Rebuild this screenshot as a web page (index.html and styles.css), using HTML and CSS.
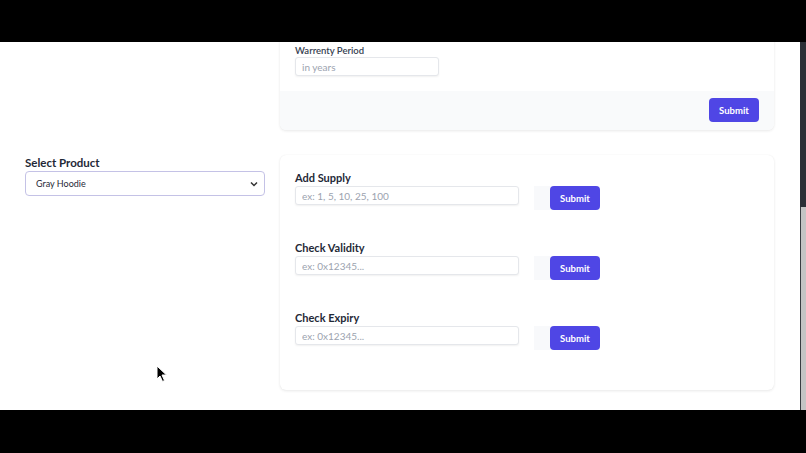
FILE: index.html
```html
<!DOCTYPE html>
<html lang="en">
<head>
    <meta charset="UTF-8">
    <meta name="viewport" content="width=device-width, initial-scale=1.0">
    <title>Product Admin</title>
    <link rel="stylesheet" href="styles.css">
</head>
<body>
    <div class="bar"></div>
    <div class="viewport">
        <div class="scroller">
            <div class="page">
                <div></div>
                <div class="card">
                    <div class="card-body">
                        <label class="small-label">Warrenty Period</label>
                        <input class="input input-short" type="text" placeholder="in years">
                    </div>
                    <div class="card-footer">
                        <button class="btn">Submit</button>
                    </div>
                </div>

                <div class="side">
                    <label class="side-label">Select Product</label>
                    <div class="select">
                        <span>Gray Hoodie</span>
                        <svg width="8" height="6" viewBox="0 0 8 6"><path d="M1 1.5 L4 4.5 L7 1.5" fill="none" stroke="#333" stroke-width="1.5"/></svg>
                    </div>
                </div>
                <div class="card card-actions">
                    <div class="field">
                        <label class="field-label">Add Supply</label>
                        <div class="field-row">
                            <input class="input" type="text" placeholder="ex: 1, 5, 10, 25, 100">
                            <div class="btn-wrap"><button class="btn">Submit</button></div>
                        </div>
                    </div>
                    <div class="field">
                        <label class="field-label">Check Validity</label>
                        <div class="field-row">
                            <input class="input" type="text" placeholder="ex: 0x12345...">
                            <div class="btn-wrap"><button class="btn">Submit</button></div>
                        </div>
                    </div>
                    <div class="field">
                        <label class="field-label">Check Expiry</label>
                        <div class="field-row">
                            <input class="input" type="text" placeholder="ex: 0x12345...">
                            <div class="btn-wrap"><button class="btn">Submit</button></div>
                        </div>
                    </div>
                </div>
            </div>
            <svg class="cursor" width="12" height="18" viewBox="0 0 12 18"><path d="M1 1 L1 14 L4 11 L6.5 16.5 L8.5 15.5 L6 10 L10.5 10 Z" fill="#000" stroke="#fff" stroke-width="1"/></svg>
        </div>
        <div class="scrollbar"><div class="thumb"></div></div>
    </div>
    <div class="bar bar-bottom"></div>
</body>
</html>
```

FILE: styles.css
```css
body {
    margin: 0;
    background-color: #000;
    font-family: Lato, "Open Sans", Arial, sans-serif;
    width: 806px;
    height: 453px;
    overflow: hidden;
}
.bar {
    height: 42px;
    background-color: #000;
}
.bar-bottom {
    height: 43px;
}
.viewport {
    display: flex;
    height: 368px;
    background-color: #fff;
}
.scroller {
    position: relative;
    flex: 1;
    overflow: hidden;
}
.page {
    display: grid;
    grid-template-columns: 240px 494px;
    column-gap: 15px;
    row-gap: 25px;
    padding: 0 26px 0 25px;
    margin-top: -13px; /* scrolled down a little */
}
.card {
    background-color: #fff;
    border-radius: 6px;
    box-shadow: 0 1px 3px rgba(0, 0, 0, 0.09), 0 0 1px rgba(0, 0, 0, 0.06);
    overflow: hidden;
}
.card-body {
    display: flex;
    flex-direction: column;
    padding: 15px 15px 15px;
}
.small-label {
    font-size: 9.5px;
    font-weight: 600;
    color: #374151;
    line-height: 13px;
}
.input {
    box-sizing: border-box;
    width: 224px;
    height: 19px;
    border: 1px solid #e5e7eb;
    border-radius: 3px;
    box-shadow: 0 1px 2px rgba(0, 0, 0, 0.06);
    padding: 0 6px;
    font-family: inherit;
    font-size: 10px;
    color: #374151;
    outline: none;
}
.input::placeholder {
    color: #9ca3af;
}
.input-short {
    width: 144px;
}
.card-footer {
    display: flex;
    justify-content: flex-end;
    background-color: #f9fafb;
    padding: 7px 15px 8px;
}
.btn {
    width: 50px;
    height: 24px;
    border: none;
    border-radius: 4px;
    background-color: #4f46e5;
    color: #fff;
    font-family: inherit;
    font-size: 9.5px;
    font-weight: 700;
    cursor: pointer;
    padding: 0;
}
.side {
    display: flex;
    flex-direction: column;
}
.side-label {
    font-size: 11.5px;
    font-weight: 700;
    color: #1f2937;
    line-height: 16px;
}
.select {
    box-sizing: border-box;
    display: flex;
    justify-content: space-between;
    align-items: center;
    height: 25px;
    border: 1px solid #c4c2e6;
    border-radius: 4px;
    padding: 0 6px 0 10px;
    font-size: 9px;
    color: #1f2937;
}
.card-actions {
    padding: 15px 15px 10px;
}
.field {
    margin-bottom: 30px;
}
.field-label {
    display: block;
    font-size: 11px;
    font-weight: 700;
    color: #1f2937;
    line-height: 16px;
}
.field-row {
    display: flex;
    align-items: flex-start;
    gap: 15px;
}
.btn-wrap {
    display: flex;
    justify-content: flex-end;
    width: 66px;
    background-color: #f8f9fb;
}
.cursor {
    position: absolute;
    left: 156px;
    top: 323px;
}
.scrollbar {
    display: flex;
    flex-direction: column;
    width: 6px;
    background-color: #2b2f36;
}
.thumb {
    flex: 1;
    margin-top: 165px;
    background-color: #c4c4c4;
    border-left: 1px solid #3a3d42;
}
```
